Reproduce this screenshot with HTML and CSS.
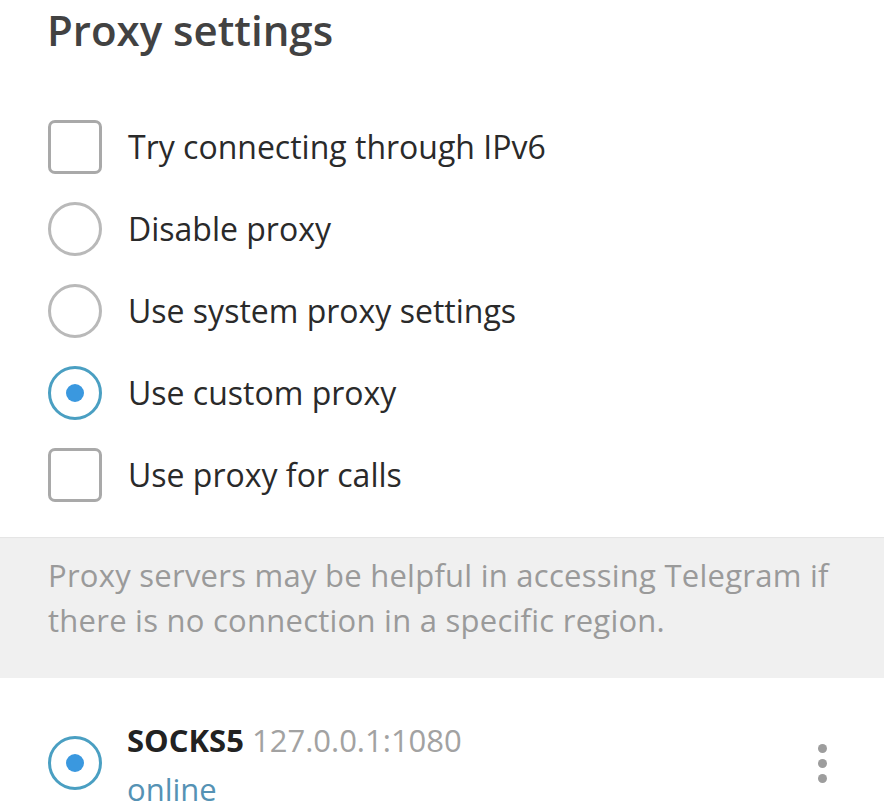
FILE: index.html
```html
<!DOCTYPE html>
<html lang="en">
<head>
<meta charset="utf-8">
<title>Proxy settings</title>
<link rel="stylesheet" href="styles.css">
</head>
<body>
<div class="page">
  <h1 class="title">Proxy settings</h1>
  <div class="options">
    <div class="row"><span class="box"></span><span class="label">Try connecting through IPv6</span></div>
    <div class="row"><span class="radio"></span><span class="label">Disable proxy</span></div>
    <div class="row"><span class="radio"></span><span class="label">Use system proxy settings</span></div>
    <div class="row"><span class="radio on"></span><span class="label">Use custom proxy</span></div>
    <div class="row"><span class="box"></span><span class="label">Use proxy for calls</span></div>
  </div>
  <div class="info">Proxy servers may be helpful in accessing Telegram if there is no connection in a specific region.</div>
  <div class="proxy">
    <span class="radio on proxy-radio"></span>
    <div class="proxy-text">
      <div class="proxy-name"><b>SOCKS5</b> <span class="addr">127.0.0.1:1080</span></div>
      <div class="proxy-status">online</div>
    </div>
    <span class="menu"><i></i><i></i><i></i></span>
  </div>
</div>
</body>
</html>
```
FILE: styles.css
```css
html, body {
  margin: 0;
  padding: 0;
  background: #ffffff;
  overflow: hidden;
}
body {
  font-family: "Open Sans", "Noto Sans", sans-serif;
  color: #2b2b2b;
}
.page {
  width: 884px;
  height: 812px;
  overflow: hidden;
}
.title {
  margin: 2px 0 0 0;
  padding-left: 47px;
  font-size: 42px;
  line-height: 56px;
  font-weight: 600;
  color: #424242;
}
.options {
  margin-top: 48px;
  padding-left: 48px;
  display: flex;
  flex-direction: column;
}
.row {
  height: 82px;
  display: flex;
  align-items: center;
  gap: 26px;
}
.label {
  font-size: 32px;
  line-height: 40px;
  color: #2a2a2a;
}
.box {
  box-sizing: border-box;
  width: 54px;
  height: 54px;
  border: 3px solid #a9a9a9;
  border-radius: 7px;
  flex: none;
}
.radio {
  box-sizing: border-box;
  width: 54px;
  height: 54px;
  border: 3px solid #b9b9b9;
  border-radius: 50%;
  flex: none;
  display: flex;
  align-items: center;
  justify-content: center;
}
.radio.on {
  border: 3.5px solid #4a9fc2;
}
.radio.on::after {
  content: "";
  width: 18px;
  height: 18px;
  border-radius: 50%;
  background: #3a98df;
}
.info {
  margin-top: 21px;
  background: #f0f0f0;
  box-shadow: inset 0 2px 1px -1px #e4e4e4;
  padding: 16px 30px 35px 48px;
  font-size: 31px;
  line-height: 45px;
  color: #9a9a9a;
  letter-spacing: 0.25px;
}
.proxy {
  display: flex;
  align-items: flex-start;
  padding-left: 48px;
}
.proxy-radio {
  margin-top: 58px;
}
.proxy-text {
  margin-left: 25px;
  margin-top: 42px;
  font-size: 31px;
}
.proxy-name {
  line-height: 40px;
  color: #222;
}
.proxy-name b {
  font-weight: 700;
}
.addr {
  color: #a2a2a2;
}
.proxy-status {
  margin-top: 15px;
  line-height: 28px;
  color: #5592b4;
}
.menu {
  margin-left: auto;
  margin-right: 57px;
  margin-top: 66px;
  display: flex;
  flex-direction: column;
  gap: 6px;
}
.menu i {
  display: block;
  width: 9px;
  height: 9px;
  border-radius: 50%;
  background: #9d9d9d;
}
```
